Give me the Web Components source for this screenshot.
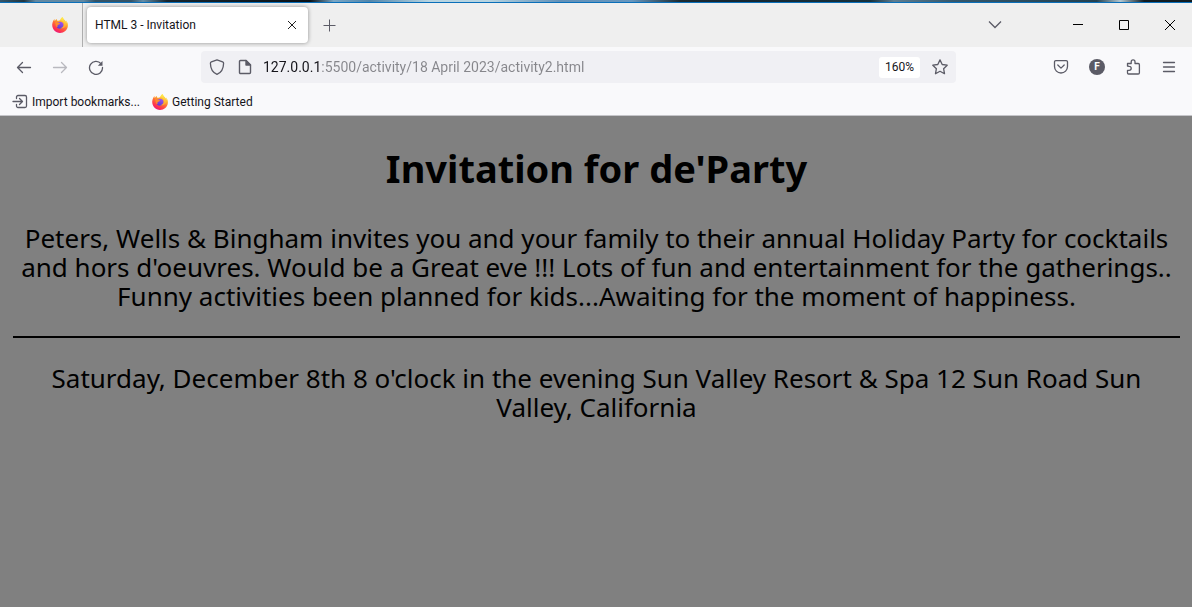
<!DOCTYPE html>
<html lang="en">
<head>
<meta charset="utf-8">
<title>HTML 3 - Invitation</title>
<style>
html,body{margin:0;min-height:100%}
body{background:#808080;font-family:Roboto,"Open Sans",sans-serif;font-size:12px;color:#15141a}
</style>
</head>
<body>
<browser-window>
  <tab-strip slot="chrome">HTML 3 - Invitation</tab-strip>
  <nav-bar slot="chrome" address="127.0.0.1:5500/activity/18 April 2023/activity2.html" zoom="160%"></nav-bar>
  <bookmarks-bar slot="chrome"></bookmarks-bar>
  <invitation-page>
    <span slot="title">Invitation for de'Party</span>
    <span slot="message">Peters, Wells &amp; Bingham invites you and your family to their annual Holiday Party for cocktails<br>and hors d'oeuvres. Would be a Great eve !!! Lots of fun and entertainment for the gatherings..<br>Funny activities been planned for kids...Awaiting for the moment of happiness.</span>
    <span slot="place">Saturday, December 8th 8 o'clock in the evening Sun Valley Resort &amp; Spa 12 Sun Road Sun<br>Valley, California</span>
  </invitation-page>
</browser-window>
<script>
const base = `*{box-sizing:border-box}
button{border:0;background:none;padding:0;margin:0;font:inherit;color:inherit;display:flex;align-items:center;justify-content:center;flex:none}
a{color:inherit;text-decoration:none}
svg{display:block;flex:none}`;

function define(name, css, html) {
  customElements.define(name, class extends HTMLElement {
    constructor() {
      super();
      this.attachShadow({mode: 'open'}).innerHTML = `<style>${base}${css}</style>` +
        (typeof html === 'function' ? html(this) : html);
    }
  });
}

define('fox-logo', ':host{display:block;flex:none}', `
<svg width="16" height="16" viewBox="0 0 16 16" aria-hidden="true">
<defs>
<linearGradient id="b" x1=".8" y1="0" x2=".25" y2="1"><stop offset="0" stop-color="#fff44f"/><stop offset=".3" stop-color="#ffb82e"/><stop offset=".55" stop-color="#ff6a36"/><stop offset=".8" stop-color="#ff3250"/><stop offset="1" stop-color="#e31587"/></linearGradient>
<linearGradient id="p" x1=".7" y1="0" x2=".3" y2="1"><stop offset="0" stop-color="#a155ef"/><stop offset="1" stop-color="#5a3ad0"/></linearGradient>
<linearGradient id="y" x1="0" y1="0" x2="0" y2="1"><stop offset="0" stop-color="#fff14c"/><stop offset="1" stop-color="#ff9a2d"/></linearGradient>
</defs>
<path fill="url(#b)" d="M15.4 5.6c-.3-.8-1-1.7-1.6-2 .5 1 .8 1.900.8 2.700C13.700 4 12.200 3.100 11.100 1.300 10.800.9 10.600.5 10.600 0 9.200.8 8.500 2.300 8.300 3.300c-.9 0-1.800.3-2.500.7C5 3.500 4.800 2.800 4.900 2.100 4 2.500 3.300 3.200 2.800 3.900c-.3-.5-.3-1.500-.2-2C1.700 2.500.4 4.700.2 7.500.1 12 3.500 16 8 16c4 0 7.500-3 7.900-7 .1-1.300-.1-2.400-.5-3.400z"/>
<circle cx="8" cy="8.300" r="3.500" fill="url(#p)"/>
<path fill="url(#y)" d="M10.600 0c-1.400.8-2.100 2.300-2.300 3.300 2.200.1 3.700 1.700 3.700 3.800 0 2.600-2.200 4.300-4.300 3.900 3.200 1.500 6.900-.7 6.900-4.700C13.700 4 12.200 3.100 11.100 1.300 10.800.9 10.600.5 10.600 0z"/>
<path fill="#ff8b2d" d="M2.900 5.200c1.200-.5 2.300-.2 2.900.4.700-.2 1.400 0 2.200.8-.2.800-1.500 1.100-2.100 1.500-.7.400-.7 1.600.1 2.200-1.500-.1-2.500-1.100-2.400-2.700z"/>
</svg>`);

define('browser-window', `
:host{display:flex;flex-direction:column;min-height:100vh}
.desktop{height:3px;border-bottom:1px solid #0a6fb9;background:linear-gradient(90deg,#34566b,#203540 2%,#6289a3 3% 7%,#345366 8% 11%,#648da7 12%,#17252e 14%,#0a1117 26%,#7aa7c6 28%,#5286ab 31%,#b7d4e1 36% 41%,#6291b8 47%,#6797bf 53%,#1c2b33 57%,#152631 61%,#16303c 73%,#5d7d91 75%,#34576c 80%,#234151 92%,#b2c7d1 94%,#101b21 96%)}
header{border-bottom:1px solid #c5c5c9;background:#f9f9fb}
main{flex:1;background:#808080}`,
`<div class="desktop"></div><header><slot name="chrome"></slot></header><main><slot></slot></main>`);

define('tab-strip', `
:host{display:flex;height:44px;background:#efefef}
.pinned{width:83px;border-right:1px solid #aeaeae;padding-left:38px}
.tab{display:flex;align-items:center;justify-content:space-between;width:221px;height:36px;margin:4px 0 4px 4px;padding:0 8px;background:#fff;border-radius:4px;box-shadow:0 0 4px rgba(0,0,0,.4)}
.tab button{width:16px;height:16px}
.new{width:32px;margin-left:5px}
.spacer{flex:1}
.list{width:36px;margin-right:41px}
.win{width:46px}`,
`<button class="pinned" aria-label="Pinned tab"><fox-logo></fox-logo></button>
<div class="tab"><span><slot></slot></span><button aria-label="Close tab"><svg width="16" height="16" fill="none" stroke="#222"><path d="M4 4l8 8M12 4l-8 8"/></svg></button></div>
<button class="new" aria-label="New tab"><svg width="16" height="16" fill="none" stroke="#5b5b66"><path d="M8.500 2.500v12M2.500 8.500h12"/></svg></button>
<span class="spacer"></span>
<button class="list" aria-label="List all tabs"><svg width="16" height="16" fill="none" stroke="#5b5b66" stroke-width="1.300"><path d="M2 4.500l6 6 6-6"/></svg></button>
<button class="win" aria-label="Minimize"><svg width="12" height="10" viewBox="-2 0 12 10" fill="none" stroke="#000"><path d="M0 4.500h10"/></svg></button>
<button class="win" aria-label="Maximize"><svg width="12" height="10" viewBox="-2 0 12 10" fill="none" stroke="#000"><path d="M.5.5h9v9h-9z"/></svg></button>
<button class="win" aria-label="Close window"><svg width="12" height="10" viewBox="-2 0 12 10" fill="none" stroke="#000"><path d="M0 0l10 10M10 0L0 10"/></svg></button>`);

define('nav-bar', `
:host{box-sizing:border-box;display:flex;align-items:center;height:41px;padding:0 5px 1px 6px;background:#f9f9fb;color:#5b5b66}
.tool{width:36px;height:32px}
.off{opacity:.4}
.spacer{flex:1 1 0;max-width:87px}
.url{flex:8 1 0;display:flex;align-items:center;height:32px;min-width:0;background:#f0f0f4;border-radius:4px;padding:0 3px 0 2px}
.id{width:28px;height:28px}
input{flex:1;min-width:0;height:28px;border:0;outline:0;padding:0 0 0 4px;margin:0;font-family:Roboto,"Open Sans",sans-serif;font-size:14px;
 color:transparent;background:linear-gradient(90deg,#15141a 61px,#86868b 61px);-webkit-background-clip:text;background-clip:text}
.zoom{width:41px;height:21px;margin-right:7px;background:#fff;border-radius:3px;font-size:12px;color:#15141a}
.star{width:26px;height:28px}
.avatar{display:flex;align-items:center;justify-content:center;width:16px;height:16px;border-radius:8px;background:#5b5b66;color:#fff;font-size:10px;font-weight:700;line-height:16px}`,
el => `<button class="tool" aria-label="Back"><svg width="16" height="16" fill="none" stroke="currentColor" stroke-width="1.300" stroke-linecap="round" stroke-linejoin="round"><path d="M14.500 8.500H1.500M6.500 3.500l-5 5 5 5"/></svg></button>
<button class="tool off" aria-label="Forward"><svg width="16" height="16" fill="none" stroke="currentColor" stroke-width="1.300" stroke-linecap="round" stroke-linejoin="round"><path d="M1.500 8.500h13M9.500 3.500l5 5-5 5"/></svg></button>
<button class="tool" aria-label="Reload"><svg width="16" height="16" fill="none" stroke="currentColor" stroke-width="1.300" stroke-linecap="round"><path d="M13 4.700A6.500 6.500 0 1 0 14.500 8.500"/><path d="M14.500 2v4.700H9.800z" fill="currentColor" stroke="none"/></svg></button>
<span class="spacer"></span>
<div class="url">
<button class="id" aria-label="Tracking protection"><svg width="16" height="16" fill="none" stroke="currentColor" stroke-width="1.300" stroke-linejoin="round"><path d="M8 .8l5.600 2c.7.300 1 .7 1 1.400C14.500 9.500 12.400 13.500 8 15.300 3.600 13.500 1.500 9.500 1.400 4.200c0-.7.300-1.100 1-1.400z"/></svg></button>
<button class="id" aria-label="Site information"><svg width="16" height="16" fill="none" stroke="currentColor" stroke-width="1.400" stroke-linejoin="round"><path d="M3.500 1.500H9L13.500 6v7.500a1 1 0 0 1-1 1h-9a1 1 0 0 1-1-1v-11a1 1 0 0 1 1-1z"/><path d="M9 1.500V6h4.500z" fill="currentColor"/></svg></button>
<input type="text" aria-label="Address" spellcheck="false" value="${el.getAttribute('address')}">
<button class="zoom" aria-label="Zoom level">${el.getAttribute('zoom')}</button>
<button class="star" aria-label="Bookmark this page"><svg width="16" height="16" fill="none" stroke="currentColor" stroke-width="1.300" stroke-linejoin="round"><path d="M8 .9l2.200 4.600 5 .7-3.600 3.500.9 5L8 12.300l-4.500 2.400.9-5L.8 6.200l5-.7z"/></svg></button>
</div>
<span class="spacer"></span>
<button class="tool" aria-label="Save to Pocket"><svg width="16" height="16" fill="none" stroke="currentColor" stroke-width="1.300" stroke-linecap="round" stroke-linejoin="round"><path d="M2.800 1.700h10.400a1.300 1.300 0 0 1 1.300 1.300v4.500a6.500 6.500 0 0 1-13 0V3a1.300 1.300 0 0 1 1.300-1.300z"/><path d="M4.800 6L8 9.100 11.200 6"/></svg></button>
<button class="tool" aria-label="Account"><span class="avatar">F</span></button>
<button class="tool" aria-label="Extensions"><svg width="16" height="16" fill="none" stroke="currentColor" stroke-width="1.300" stroke-linejoin="round"><path d="M2.500 7V4.500h3.700V2.700a1.900 1.900 0 0 1 3.800 0v1.800h3.200c.7 0 1.200.5 1.200 1.200v8.100c0 .7-.5 1.200-1.200 1.200H3.500c-.6 0-1-.4-1-1v-2.700h1.700a2 2 0 0 0 0-4z"/></svg></button>
<button class="tool" aria-label="Menu"><svg width="16" height="16" fill="none" stroke="currentColor" stroke-width="1.300" stroke-linecap="round"><path d="M2.500 3.500h11M2.500 8h11M2.500 12.500h11"/></svg></button>`);

define('bookmarks-bar', `
:host{display:flex;align-items:center;height:27px;padding:0 12px;gap:12px;background:#f9f9fb}
a{display:flex;align-items:center;gap:4px;white-space:nowrap}`,
`<a href="#import"><svg width="16" height="16" fill="none" stroke="#5b5b66" stroke-width="1.300" stroke-linecap="round" stroke-linejoin="round"><path d="M4.500 4.500V3A1.500 1.500 0 0 1 6 1.500h7A1.500 1.500 0 0 1 14.500 3v9a1.500 1.500 0 0 1-1.500 1.500H6A1.500 1.500 0 0 1 4.500 12v-1.500M1 7.500h9M7.500 4.500l3 3-3 3"/></svg>Import bookmarks...</a>
<a href="#start"><fox-logo></fox-logo>Getting Started</a>`);

define('invitation-page', `
:host{display:block;padding:27px 12px 27px 13px;color:#000;text-align:center;font-family:"Noto Sans","Open Sans",sans-serif}
h1{margin:0 0 31px;font-size:38px;line-height:50px;font-weight:700}
p{margin:0;font-size:26px;line-height:29px}
hr{margin:25px 0 26px;border:0;border-top:2px solid #000}`,
`<h1><slot name="title"></slot></h1><p><slot name="message"></slot></p><hr><p><slot name="place"></slot></p>`);
</script>
</body>
</html>
